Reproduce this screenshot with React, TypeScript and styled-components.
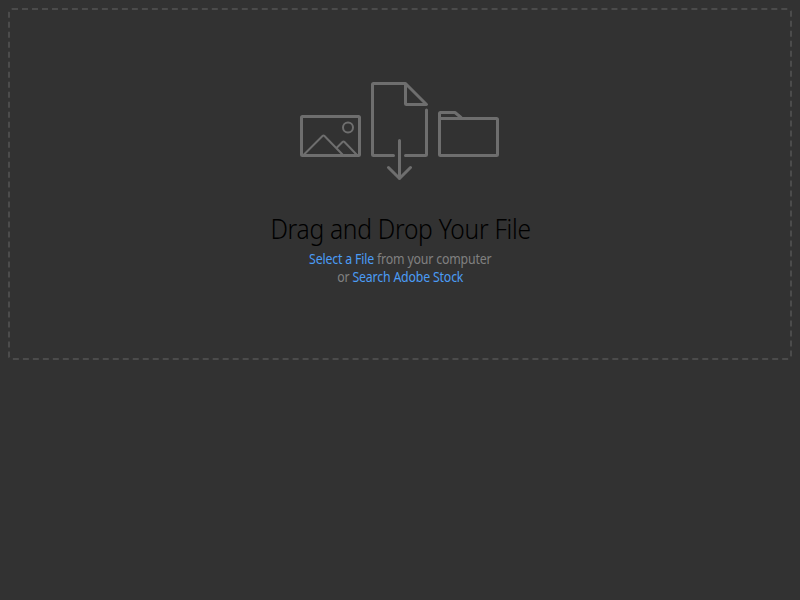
import React from "react";
import styled, { createGlobalStyle } from "styled-components";

const GlobalStyle = createGlobalStyle`
  body {
    margin: 0;
    background: #323232;
    font-family: "Noto Sans", "Open Sans", sans-serif;
  }
`;

const Page = styled.main`
  padding: 8px;
`;

const DropZone = styled.section`
  box-sizing: border-box;
  height: 352px;
  padding-top: 70px;
  border: 2px dashed #4b4b4b;
  border-radius: 4px;
  display: flex;
  flex-direction: column;
  align-items: center;
`;

const Illustration = styled.svg`
  display: block;
  flex: none;
  fill: none;
  stroke: #6e6e6e;
  stroke-width: 3px;
  stroke-linecap: round;
  stroke-linejoin: round;
`;

const FineDetail = styled.g`
  stroke-width: 2px;
`;

const Title = styled.h1`
  margin: 31px 0 0;
  font-size: 27px;
  line-height: 36px;
  font-weight: 300;
  letter-spacing: -0.3px;
  color: #000;
  white-space: nowrap;
  transform: translateX(0.5px) scaleX(0.91);
`;

const Hints = styled.div`
  margin-top: 3px;
  text-align: center;
  transform: translateX(0.5px) scaleX(0.914);
`;

const Hint = styled.p`
  margin: 0;
  font-size: 13.5px;
  line-height: 18px;
  letter-spacing: -0.2px;
  color: #808080;
  white-space: nowrap;
`;

const Link = styled.a`
  color: #4b9cf5;
  text-decoration: none;
  cursor: pointer;
`;

export default function App() {
  return (
    <>
      <GlobalStyle />
      <Page>
        <DropZone>
          <Illustration width="200" height="100" viewBox="300 80 200 100" aria-hidden="true">
            <rect x="301.5" y="116.5" width="58" height="39" rx="1" />
            <FineDetail>
              <path d="M303.5 155 322.5 136Q323.5 135 324.5 136L343 155M337 147.5 342.5 142Q343.5 141 344.5 142L357 155" />
              <circle cx="348" cy="127.5" r="5" />
            </FineDetail>
            <path d="M393.5 155.5H373.5Q372.5 155.5 372.5 154.5V84.5Q372.5 83.5 373.5 83.5H405.5L426.5 104.5H406.5Q405.5 104.5 405.5 103.5V83.5M426.5 110V154.5Q426.5 155.5 425.5 155.5H405.5" />
            <path d="M399.5 140.5V178.5M388.5 167.5 399.5 178.5 410.5 167.5" />
            <path d="M439.5 118.5H496.5Q497.5 118.5 497.5 119.5V154.5Q497.5 155.5 496.5 155.5H440.5Q439.5 155.5 439.5 154.5V113.5Q439.5 112.5 440.5 112.5H455L461 117.5" />
          </Illustration>
          <Title>Drag and Drop Your File</Title>
          <Hints>
            <Hint>
              <Link>Select a File</Link> from your computer
            </Hint>
            <Hint>
              or <Link>Search Adobe Stock</Link>
            </Hint>
          </Hints>
        </DropZone>
      </Page>
    </>
  );
}
